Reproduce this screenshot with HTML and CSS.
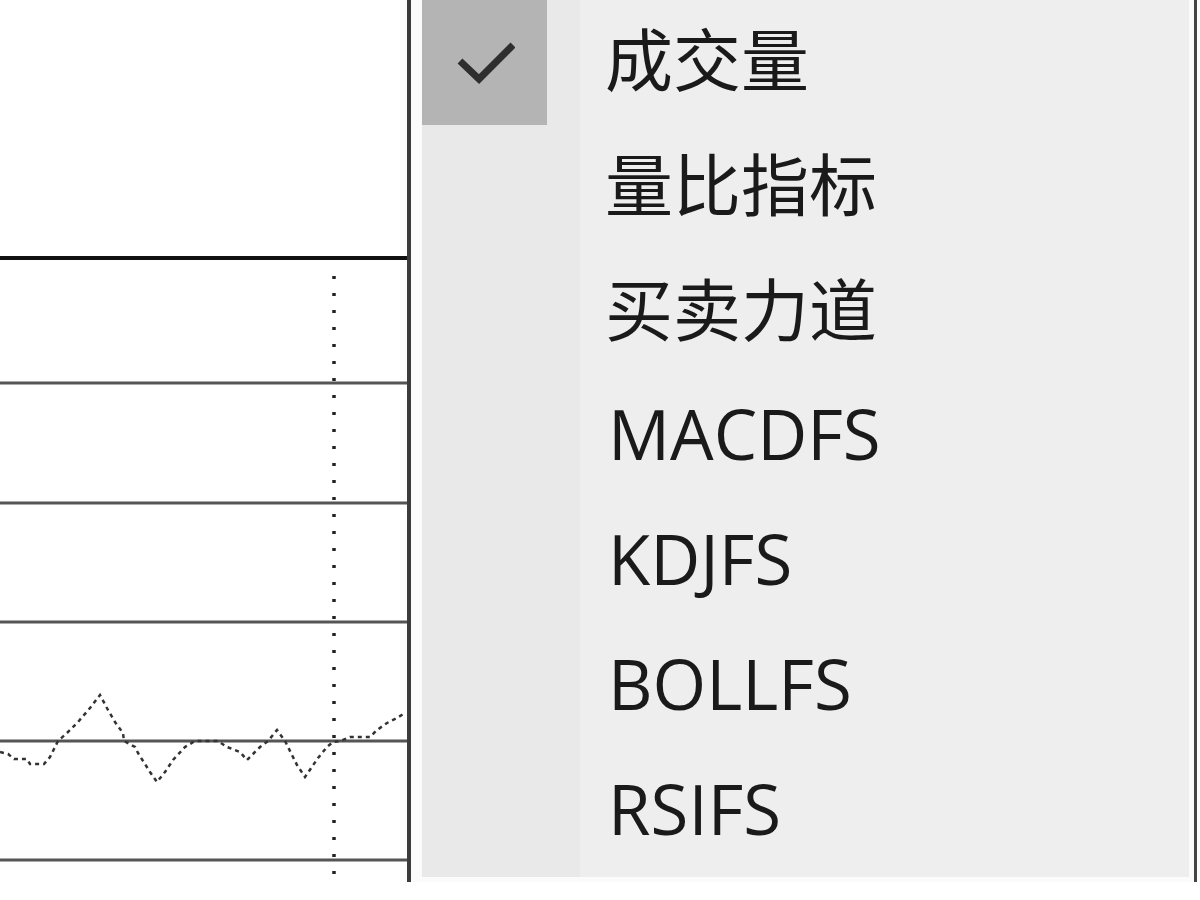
FILE: index.html
```html
<!DOCTYPE html>
<html>
<head>
<meta charset="UTF-8">
<title>指标菜单</title>
<link rel="stylesheet" href="styles.css">
</head>
<body>
	<div id="ecran">
		<div class="zone_graphique">
			<svg class="graphique" width="407" height="882" viewBox="0 0 407 882">
				<line x1="0" y1="258" x2="407" y2="258" class="ligne_forte"/>
				<line x1="0" y1="383" x2="407" y2="383" class="ligne"/>
				<line x1="0" y1="503" x2="407" y2="503" class="ligne"/>
				<line x1="0" y1="622" x2="407" y2="622" class="ligne"/>
				<line x1="0" y1="741" x2="407" y2="741" class="ligne"/>
				<line x1="0" y1="860" x2="407" y2="860" class="ligne"/>
				<line x1="334" y1="276" x2="334" y2="880" class="curseur"/>
				<polyline class="courbe" points="0,752 8,754 14,759 27,759 30,764 44,764 50,757 55,747 58,741 67,733 78,722 90,708 100,695 108,710 115,722 123,733 124,741 135,747 138,753 150,772 157,782 165,772 173,760 185,747 195,741 218,741 227,747 240,752 247,760 260,747 268,741 277,730 285,741 288,747 297,765 305,777 318,758 327,747 333,742 340,741 350,737 370,737 377,730 387,723 397,718 405,713"/>
			</svg>
		</div>
		<div class="menu">
			<ul class="liste_menu">
				<li class="coche"><span class="case_coche"><svg width="60" height="60" viewBox="0 0 60 60"><polyline points="5,28 24,46 58,12"/></svg></span><span class="texte">成交量</span></li>
				<li><span class="case_coche"></span><span class="texte">量比指标</span></li>
				<li><span class="case_coche"></span><span class="texte">买卖力道</span></li>
				<li><span class="case_coche"></span><span class="texte latin">MACDFS</span></li>
				<li><span class="case_coche"></span><span class="texte latin">KDJFS</span></li>
				<li><span class="case_coche"></span><span class="texte latin">BOLLFS</span></li>
				<li><span class="case_coche"></span><span class="texte latin">RSIFS</span></li>
			</ul>
		</div>
	</div>
</body>
</html>
```
FILE: styles.css
```css
html, body{
	margin:0;
	padding:0;
	background:#fff;
	overflow:hidden;
}

#ecran{
	width:1200px;
	height:900px;
	display:flex;
	align-items:flex-start;
}

.zone_graphique{
	width:407px;
	height:882px;
	border-right:4px solid #3c3c3c;
	flex-shrink:0;
}

.graphique{
	display:block;
}
.ligne{
	stroke:#555;
	stroke-width:3;
}
.ligne_forte{
	stroke:#111;
	stroke-width:4;
}
.curseur{
	stroke:#222;
	stroke-width:3.5;
	stroke-dasharray:3 14;
}
.courbe{
	fill:none;
	stroke:#333;
	stroke-width:2.5;
	stroke-dasharray:4 4;
}

.menu{
	box-sizing:border-box;
	width:786px;
	height:882px;
	padding:0 5px 5px 11px;
	background:#fbfbfb;
	border-right:3px solid #444;
	flex-shrink:0;
}

.liste_menu{
	list-style:none;
	margin:0;
	padding:0;
	height:877px;
	background:linear-gradient(to right, #e9e9e9 158px, #eeeeee 158px);
}

.liste_menu li{
	height:125px;
	display:flex;
	align-items:flex-start;
}

.case_coche{
	width:125px;
	height:125px;
	margin-right:58px;
	display:flex;
	align-items:center;
	justify-content:center;
}
.coche .case_coche{
	background:#b4b4b4;
}
.case_coche svg polyline{
	fill:none;
	stroke:#2e2e2e;
	stroke-width:7;
}

.texte{
	font:68px "Noto Sans CJK SC", sans-serif;
	color:#1a1a1a;
	line-height:113px;
}
.texte.latin{
	font-family:"Open Sans", "Noto Sans CJK SC", sans-serif;
	font-size:69px;
	line-height:117px;
	padding-left:3px;
}
```
